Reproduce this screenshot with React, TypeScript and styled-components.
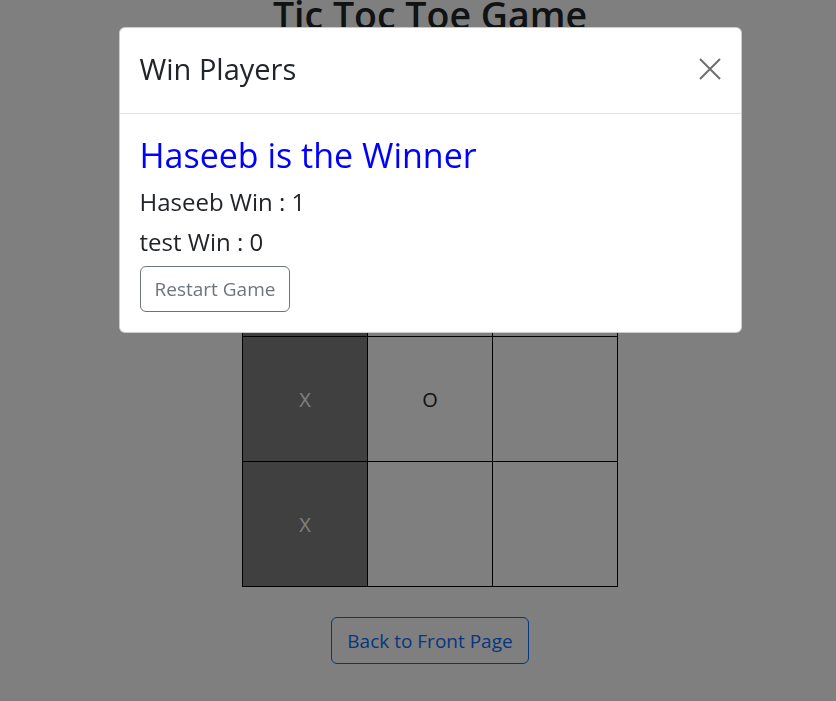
import React from "react";
import styled, { createGlobalStyle } from "styled-components";

const GlobalStyle = createGlobalStyle`
  *, *::before, *::after { box-sizing: border-box; }
  html, body { margin: 0; padding: 0; background: #ffffff; }
  body {
    font-family: "Open Sans", "Noto Sans", "Liberation Sans", sans-serif;
    color: #212529;
  }
`;

const Page = styled.main`
  display: flex;
  flex-direction: column;
  align-items: center;
  padding-left: 24px;
  text-align: center;
`;

const GameTitle = styled.h1`
  margin: 0;
  font-size: 37.5px;
  line-height: 30px;
  font-weight: 600;
  color: #212529;
`;

const Board = styled.div`
  margin-top: 181px;
  display: grid;
  grid-template-columns: repeat(3, 124px);
  grid-auto-rows: 124px;
  gap: 1px;
  padding: 1px;
  background: #000000;
`;

const Cell = styled.div<{ $win?: boolean }>`
  display: flex;
  align-items: center;
  justify-content: center;
  background: ${(p) => (p.$win ? "#808080" : "#ffffff")};
  color: ${(p) => (p.$win ? "#ffffff" : "#212529")};
  font-size: 20px;
`;

const BackButton = styled.button`
  margin-top: 30px;
  height: 47px;
  padding: 0 15px;
  display: inline-flex;
  align-items: center;
  justify-content: center;
  font-family: inherit;
  font-size: 19px;
  color: #0d6efd;
  background: transparent;
  border: 1px solid #0d6efd;
  border-radius: 6px;
`;

const Backdrop = styled.div`
  position: fixed;
  inset: 0;
  background: rgba(0, 0, 0, 0.5);
  display: flex;
  justify-content: center;
  align-items: flex-start;
  padding-left: 24px;
`;

const Dialog = styled.div`
  margin-top: 27px;
  width: 623px;
  background: #ffffff;
  border: 1px solid rgba(0, 0, 0, 0.2);
  border-radius: 6px;
  display: flex;
  flex-direction: column;
`;

const Header = styled.div`
  display: flex;
  align-items: center;
  justify-content: space-between;
  padding: 24px 20px 27px 20px;
  border-bottom: 1px solid #dee2e6;
`;

const ModalTitle = styled.h5`
  margin: 0;
  font-size: 29px;
  line-height: 34px;
  font-weight: 400;
  color: #212529;
`;

const CloseButton = styled.button`
  width: 22px;
  height: 22px;
  padding: 0;
  border: 0;
  background: transparent;
  display: flex;
  align-items: center;
  justify-content: center;
`;

const Body = styled.div`
  display: flex;
  flex-direction: column;
  align-items: flex-start;
  padding: 21px 20px 20px 20px;
`;

const WinnerHeading = styled.h3`
  margin: 0 0 9px 0;
  font-size: 34px;
  line-height: 40px;
  font-weight: 400;
  color: #0000ff;
`;

const Score = styled.p`
  margin: 0 0 4px 0;
  font-size: 24px;
  line-height: 36px;
  color: #212529;
`;

const RestartButton = styled.button`
  margin-top: 2px;
  height: 46px;
  padding: 0 14px;
  display: inline-flex;
  align-items: center;
  justify-content: center;
  font-family: inherit;
  font-size: 19px;
  color: #6c757d;
  background: transparent;
  border: 1px solid #6c757d;
  border-radius: 6px;
`;

const board: { v: string; win?: boolean }[] = [
  { v: "X", win: true },
  { v: "O" },
  { v: "" },
  { v: "X", win: true },
  { v: "O" },
  { v: "" },
  { v: "X", win: true },
  { v: "" },
  { v: "" },
];

export default function App() {
  return (
    <>
      <GlobalStyle />
      <Page>
        <GameTitle>Tic Toc Toe Game</GameTitle>
        <Board>
          {board.map((c, i) => (
            <Cell key={i} $win={c.win}>
              {c.v}
            </Cell>
          ))}
        </Board>
        <BackButton>Back to Front Page</BackButton>
      </Page>
      <Backdrop>
        <Dialog role="dialog">
          <Header>
            <ModalTitle>Win Players</ModalTitle>
            <CloseButton aria-label="Close">
              <svg width="22" height="22" viewBox="0 0 22 22">
                <path
                  d="M1 1 L21 21 M21 1 L1 21"
                  stroke="#6e6e6e"
                  strokeWidth="2"
                  fill="none"
                />
              </svg>
            </CloseButton>
          </Header>
          <Body>
            <WinnerHeading>Haseeb is the Winner</WinnerHeading>
            <Score>Haseeb Win : 1</Score>
            <Score>test Win : 0</Score>
            <RestartButton>Restart Game</RestartButton>
          </Body>
        </Dialog>
      </Backdrop>
    </>
  );
}
